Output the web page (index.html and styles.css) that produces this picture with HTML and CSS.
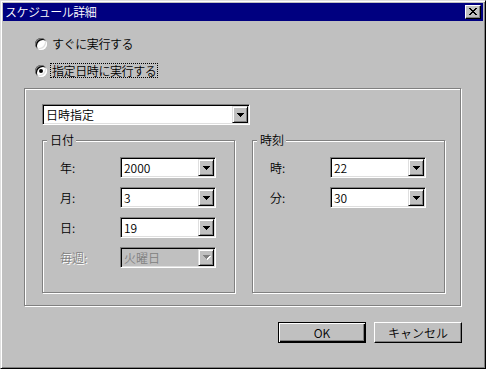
FILE: index.html
```html
<!DOCTYPE html>
<html lang="ja">
<head>
<meta charset="utf-8">
<title>スケジュール詳細</title>
<link rel="stylesheet" href="styles.css">
</head>
<body>
<div class="window">
  <div class="titlebar">
    <span class="title">スケジュール詳細</span>
    <span class="close-btn">
      <svg width="8" height="7" viewBox="0 0 8 7" shape-rendering="crispEdges"><path d="M0 0h2v1h-2zM6 0h2v1h-2zM1 1h2v1h-2zM5 1h2v1h-2zM2 2h4v1h-4zM3 3h2v1h-2zM2 4h4v1h-4zM1 5h2v1h-2zM5 5h2v1h-2zM0 6h2v1h-2zM6 6h2v1h-2z" fill="#000"/></svg>
    </span>
  </div>
  <div class="client">
    <div class="radio-row">
      <span class="radio-circle"></span>
      <span class="radio-text">すぐに実行する</span>
    </div>
    <div class="radio-row second">
      <span class="radio-circle checked"></span>
      <span class="radio-text focus">指定日時に実行する</span>
    </div>

    <div class="main-group">
      <div class="combo wide">
        <span class="combo-value">日時指定</span>
        <span class="combo-btn"><svg width="7" height="4" viewBox="0 0 7 4" shape-rendering="crispEdges"><path d="M0 0h7v1h-7zM1 1h5v1h-5zM2 2h3v1h-3zM3 3h1v1h-1z" fill="#000"/></svg></span>
      </div>

      <div class="groups">
        <div class="group">
          <span class="group-label">日付</span>
          <div class="field-row">
            <span class="field-label">年:</span>
            <div class="combo small">
              <span class="combo-value">2000</span>
              <span class="combo-btn"><svg width="7" height="4" viewBox="0 0 7 4" shape-rendering="crispEdges"><path d="M0 0h7v1h-7zM1 1h5v1h-5zM2 2h3v1h-3zM3 3h1v1h-1z" fill="#000"/></svg></span>
            </div>
          </div>
          <div class="field-row">
            <span class="field-label">月:</span>
            <div class="combo small">
              <span class="combo-value">3</span>
              <span class="combo-btn"><svg width="7" height="4" viewBox="0 0 7 4" shape-rendering="crispEdges"><path d="M0 0h7v1h-7zM1 1h5v1h-5zM2 2h3v1h-3zM3 3h1v1h-1z" fill="#000"/></svg></span>
            </div>
          </div>
          <div class="field-row">
            <span class="field-label">日:</span>
            <div class="combo small">
              <span class="combo-value">19</span>
              <span class="combo-btn"><svg width="7" height="4" viewBox="0 0 7 4" shape-rendering="crispEdges"><path d="M0 0h7v1h-7zM1 1h5v1h-5zM2 2h3v1h-3zM3 3h1v1h-1z" fill="#000"/></svg></span>
            </div>
          </div>
          <div class="field-row">
            <span class="field-label disabled">毎週:</span>
            <div class="combo small disabled">
              <span class="combo-value">火曜日</span>
              <span class="combo-btn"><svg width="8" height="5" viewBox="0 0 8 5" shape-rendering="crispEdges"><path d="M1 1h7v1h-7zM2 2h5v1h-5zM3 3h3v1h-3zM4 4h1v1h-1z" fill="#fff"/><path d="M0 0h7v1h-7zM1 1h5v1h-5zM2 2h3v1h-3zM3 3h1v1h-1z" fill="#808080"/></svg></span>
            </div>
          </div>
        </div>

        <div class="group">
          <span class="group-label">時刻</span>
          <div class="field-row">
            <span class="field-label">時:</span>
            <div class="combo small">
              <span class="combo-value">22</span>
              <span class="combo-btn"><svg width="7" height="4" viewBox="0 0 7 4" shape-rendering="crispEdges"><path d="M0 0h7v1h-7zM1 1h5v1h-5zM2 2h3v1h-3zM3 3h1v1h-1z" fill="#000"/></svg></span>
            </div>
          </div>
          <div class="field-row">
            <span class="field-label">分:</span>
            <div class="combo small">
              <span class="combo-value">30</span>
              <span class="combo-btn"><svg width="7" height="4" viewBox="0 0 7 4" shape-rendering="crispEdges"><path d="M0 0h7v1h-7zM1 1h5v1h-5zM2 2h3v1h-3zM3 3h1v1h-1z" fill="#000"/></svg></span>
            </div>
          </div>
        </div>
      </div>
    </div>

    <div class="buttons">
      <button class="btn default" type="button">OK</button>
      <button class="btn" type="button">キャンセル</button>
    </div>
  </div>
</div>
</body>
</html>
```

FILE: styles.css
```css
html, body {
  margin: 0;
  padding: 0;
  background: #c0c0c0;
}

.window {
  width: 486px;
  height: 369px;
  box-sizing: border-box;
  border: 1px solid;
  border-color: #dfdfdf #000 #000 #dfdfdf;
  box-shadow: inset 1px 1px 0 #fff, inset -1px -1px 0 #808080;
  padding: 2px;
  background: #c0c0c0;
  font-family: "Noto Sans CJK JP", sans-serif;
  font-size: 12px;
  font-weight: 350;
  color: #000;
}

.titlebar {
  height: 18px;
  background: #000080;
  color: #fff;
  display: flex;
  align-items: center;
  padding-left: 2px;
}

.title {
  flex: 1;
  line-height: 18px;
  letter-spacing: -0.5px;
}

.close-btn {
  width: 16px;
  height: 14px;
  box-sizing: border-box;
  margin-right: 2px;
  border: 1px solid;
  border-color: #fff #000 #000 #fff;
  box-shadow: inset -1px -1px 0 #808080;
  background: #c0c0c0;
  display: flex;
  align-items: center;
  justify-content: center;
}

.close-btn svg {
  display: block;
  margin: 0 1px 1px 0;
}

.client {
  padding: 15px 21px 0;
}

.radio-row {
  display: flex;
  align-items: center;
  height: 15px;
}

.radio-row.second {
  margin-top: 12px;
}

.radio-circle {
  position: relative;
  width: 12px;
  height: 12px;
  margin-left: 11px;
  margin-right: 3px;
  border-radius: 50%;
  background: #fff;
  box-shadow: inset 1px 1px 0 #808080, inset -1px -1px 0 #fff, inset 2px 2px 0 #000, inset -2px -2px 0 #dfdfdf;
}

.radio-circle.checked::after {
  content: "";
  position: absolute;
  left: 4px;
  top: 4px;
  width: 4px;
  height: 4px;
  border-radius: 50%;
  background: #000;
}

.radio-text {
  border: 1px dotted transparent;
  padding: 0 1px;
  line-height: 13px;
  letter-spacing: -0.4px;
}

.radio-text.focus {
  border-color: #000;
}

.main-group {
  margin-top: 10px;
  width: 437px;
  height: 218px;
  box-sizing: border-box;
  border: 1px solid #808080;
  box-shadow: inset 1px 1px 0 #fff, 1px 1px 0 #fff;
  padding: 15px 0 0 17px;
}

.combo {
  display: flex;
  box-sizing: border-box;
  height: 21px;
  border: 1px solid;
  border-color: #808080 #fff #fff #808080;
  padding: 1px;
  box-shadow: inset 1px 1px 0 #000, inset -1px -1px 0 #dfdfdf;
  background: #fff;
}

.combo.wide {
  width: 208px;
}

.combo.small {
  width: 96px;
}

.combo.disabled {
  background: #c0c0c0;
  color: #808080;
}

.combo-value {
  flex: 1;
  padding-left: 2px;
  line-height: 17px;
}

.combo-btn {
  width: 16px;
  height: 17px;
  box-sizing: border-box;
  border: 1px solid;
  border-color: #dfdfdf #000 #000 #dfdfdf;
  box-shadow: inset 1px 1px 0 #fff, inset -1px -1px 0 #808080;
  background: #c0c0c0;
  display: flex;
  align-items: center;
  justify-content: center;
}

.combo-btn svg {
  display: block;
  margin-left: 1px;
}

.groups {
  display: flex;
  gap: 17px;
  margin-top: 15px;
}

.group {
  position: relative;
  width: 193px;
  height: 153px;
  box-sizing: border-box;
  border: 1px solid #808080;
  box-shadow: inset 1px 1px 0 #fff, 1px 1px 0 #fff;
  padding: 16px 0 0 17px;
}

.group-label {
  position: absolute;
  left: 4px;
  top: -8px;
  padding: 0 2px 0 3px;
  background: #c0c0c0;
  line-height: 14px;
}

.field-row {
  display: flex;
  align-items: center;
  height: 21px;
  margin-bottom: 9px;
}

.field-label {
  width: 60px;
  line-height: 14px;
}

.field-label.disabled {
  color: #808080;
  text-shadow: 1px 1px 0 #fff;
}

.buttons {
  display: flex;
  justify-content: flex-end;
  gap: 8px;
  margin-top: 16px;
}

.btn {
  width: 88px;
  height: 21px;
  box-sizing: border-box;
  margin: 0;
  padding: 0;
  border: 1px solid;
  border-color: #fff #000 #000 #fff;
  box-shadow: inset -1px -1px 0 #808080;
  background: #c0c0c0;
  font-family: "Noto Sans CJK JP", sans-serif;
  font-size: 12px;
  font-weight: 350;
  line-height: 17px;
  color: #000;
}

.btn.default {
  border-color: #000;
  box-shadow: inset 1px 1px 0 #fff, inset -1px -1px 0 #000, inset -2px -2px 0 #808080;
}
```
